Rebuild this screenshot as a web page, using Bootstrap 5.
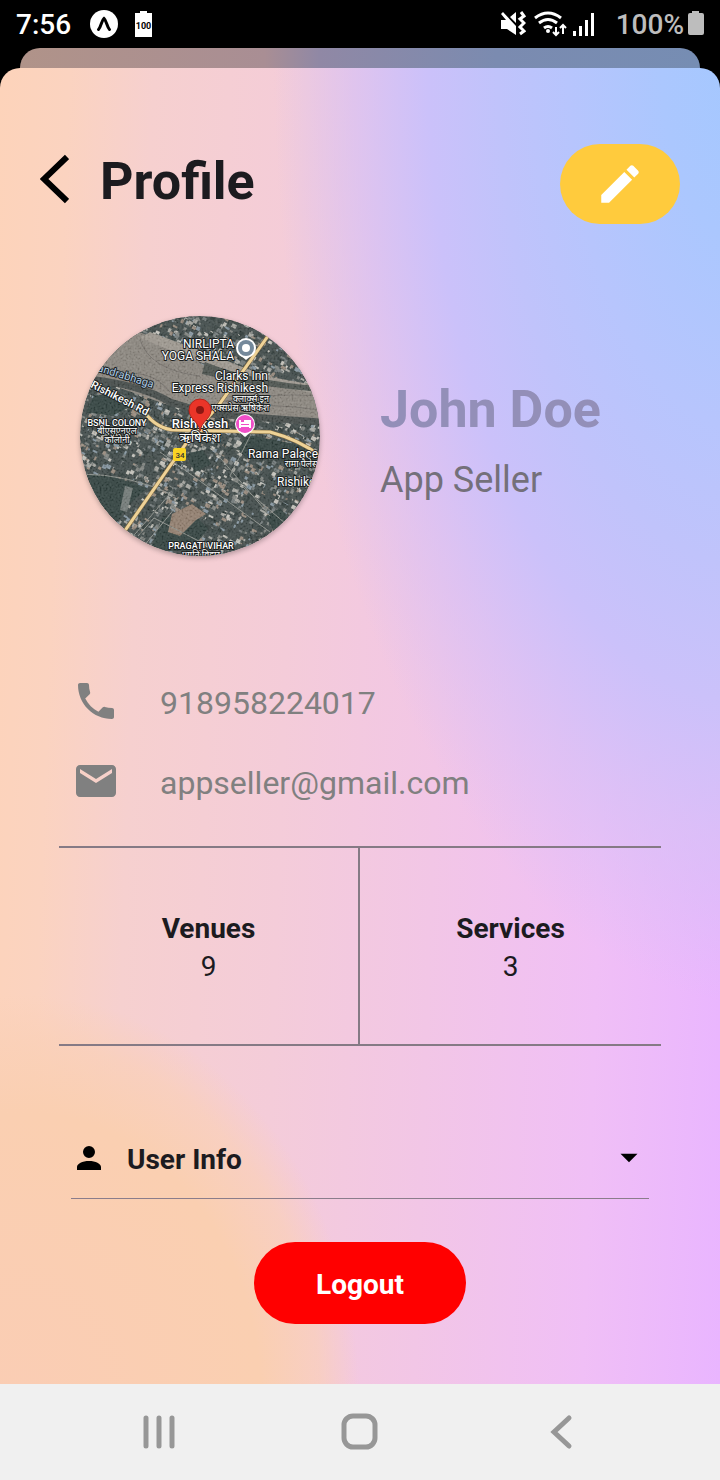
<!DOCTYPE html>
<html lang="en">
<head>
<meta charset="utf-8">
<meta name="viewport" content="width=device-width, initial-scale=1">
<title>Profile</title>
<link rel="stylesheet" href="https://cdn.jsdelivr.net/npm/bootstrap@5.3.0/dist/css/bootstrap.min.css">
<style>
  body { background: #000; color: #1c1b1f; font-family: Roboto, "Noto Sans", "Liberation Sans", sans-serif; font-size: 28px; line-height: 38px; }
  svg { display: block; flex-shrink: 0; }
  .plain { border: 0; background: none; padding: 0; }
  .statusbar { height: 48px; padding: 2px 15px 0 16px; color: #fff; font-weight: 500; }
  .charge { color: #bdbdbd; margin-right: 3px; }
  .sheet-behind { height: 20px; margin: 0 20px; border-radius: 20px 20px 0 0; background: linear-gradient(90deg, #b09389 0%, #a98e94 36%, #9088a5 44%, #7b8bb0 70%, #768db3 100%); }
  .sheet {
    border-radius: 20px 20px 0 0;
    padding: 76px 0 60px;
    background:
      radial-gradient(ellipse 46% 30% at 3% 101%, #facdb4 0%, #facfb1 72%, #fad0b6aa 90%, #facdb000 102%),
      radial-gradient(ellipse 65% 69% at 105% 0%, #a3c8ff 0%, #abc7fe 20%, #b7c5fd 40%, #c0c3fb 55%, #cbc1fa 70%, #d5c1f6b0 85%, #e2c3ec00 103%),
      linear-gradient(92deg, #fdd3ba 0%, #fbd3c0 9%, #f6d0cf 20%, #f4ccd9 40%, #f2c6e6 60%, #f0bff6 82%, #e9b5ff 100%);
  }
  .top-row { padding: 0 40px; gap: 31px; }
  .title { font-size: 52px; line-height: 76px; font-weight: 700; }
  .edit-btn { width: 120px; height: 80px; border-radius: 40px; background: #ffcb3d; }
  .person { margin-top: 92px; padding: 0 40px 0 80px; gap: 60px; }
  .avatar { width: 240px; height: 240px; border-radius: 50%; box-shadow: 0 2px 5px #0004; }
  .full-name { font-size: 52px; line-height: 84px; font-weight: 700; color: #938fb8; }
  .role { font-size: 36px; line-height: 56px; color: #74707a; }
  .contacts { margin-top: 105px; padding: 0 72px; }
  .contacts a { height: 80px; gap: 40px; font-size: 32px; color: #808080; }
  .stats { margin: 25px 59px 0; border: solid #857a85; border-width: 2px 0; height: 200px; }
  .stats .stat:first-child { border-right: 2px solid #857a85; }
  .info-toggle { margin: 72px 71px 0; padding: 0 3px 0 0; height: 81px; border-bottom: 1px solid #8b7d8b; color: #1c1b1f; }
  .logout { margin-top: 43px; width: 212px; height: 82px; border-radius: 41px; background: #f00; color: #fff; }
  .navkeys { height: 96px; padding: 0 58px; background: #f0f0f0; }
  .map text { fill: #fff; stroke: #1b2020; stroke-width: 2px; paint-order: stroke; stroke-linejoin: round; }
</style>
</head>
<body class="d-flex flex-column min-vh-100">
<header class="statusbar d-flex align-items-center">
  <span>7:56</span>
  <svg class="ms-3" width="32" height="32" viewBox="0 0 32 32"><circle cx="17" cy="15" r="14" fill="#fff"/><path d="M11.500 20.500C14 18 14.500 11.500 17 9.500C19.500 11.500 20 18 22.500 20.500" fill="none" stroke="#000" stroke-width="3" stroke-linecap="round"/></svg>
  <svg class="ms-3" width="18" height="28" viewBox="0 0 18 28"><path d="M0 2h5V0h7v2h5v24H0z" fill="#fff"/><text x="8.500" y="18" text-anchor="middle" font-size="9" font-weight="700">100</text></svg>
  <svg class="ms-auto" width="26" height="28" viewBox="0 0 26 28" fill="#fff"><path d="M1 9h5L1 3l2-2 13 14v9L7 18H1zM10 6l6-5v11z"/><path d="M21 1l3 4-4 3 4 4-4 4 4 4-4 3" fill="none" stroke="#fff" stroke-width="3"/></svg>
  <svg class="ms-2" width="34" height="28" viewBox="0 0 34 28" fill="none" stroke="#fff" stroke-width="3"><path d="M1 7Q14-3 27 7M5 12q9-7 18 0M10 17q4-3 8 0"/><circle cx="14" cy="20" r="2" fill="#fff" stroke="none"/><path d="M22 16v8m-3-3l3 3 3-3M29 23v-9m-3 3l3-3 3 3" stroke-width="2"/></svg>
  <svg class="ms-1" width="24" height="26" viewBox="0 0 24 26" fill="#fff"><path d="M1 19h3v5H1zM7 14h3v10H7zM13 8h3v16h-3zM19 1h3v23h-3z"/></svg>
  <span class="charge ms-3 ps-1">100%</span>
  <svg width="18" height="28" viewBox="0 0 18 28"><path d="M2 2h3V0h7v2h3q2 0 2 2v18q0 2-2 2H3q-2 0-2-2V4q0-2 2-2" fill="#bdbdbd"/></svg>
</header>
<div class="sheet-behind"></div>
<main class="sheet flex-grow-1 d-flex flex-column">
  <div class="top-row d-flex align-items-start">
    <button class="plain" aria-label="Back"><svg width="29" height="70" viewBox="0 0 29 70"><path d="M27 13L4 35l23 22" fill="none" stroke="#000" stroke-width="6"/></svg></button>
    <h1 class="title m-0">Profile</h1>
    <button class="plain edit-btn ms-auto d-flex align-items-center justify-content-center" aria-label="Edit profile"><svg width="50" height="50" viewBox="0 0 24 24" fill="#fff"><path d="M20.710 7.040c.39-.39.39-1.040 0-1.410l-2.340-2.340c-.37-.39-1.020-.39-1.410 0l-1.840 1.830 3.750 3.750M3 17.250V21h3.750L17.810 9.930l-3.750-3.750z"/></svg></button>
  </div>

  <section class="person d-flex align-items-center">
    <svg class="avatar map" viewBox="0 0 240 240" role="img" aria-label="Satellite map of Rishikesh">
      <defs>
        <clipPath id="disc"><circle cx="120" cy="120" r="120"/></clipPath>
        <filter id="grain" x="0" y="0" width="100%" height="100%"><feTurbulence type="fractalNoise" baseFrequency=".5" numOctaves="2" seed="4"/><feColorMatrix values="1.500 0 0 0 -.4  1.500 0 0 0 -.4  1.500 0 0 0 -.4  0 0 0 0 .14"/></filter>
      </defs>
      <g clip-path="url(#disc)">
        <path d="M0 0h240v240H0z" fill="#3f4a49"/>
        <g id="houses"></g>
        <path d="M-5 40L50 12L88 28L125 50L170 60L205 66L240 72V104L200 100L150 100L110 94L85 88L40 72L0 58z" fill="#8d8880"/>
        <path d="M60 22l60 24 60 22 60 10v-8l-55-10-50-20L70 16z" fill="#a09a91"/>
        <path d="M140 86q50-10 100-6M130 92q60-6 110 2M30 60q40-10 60 16M60 24q10 30 60 36" fill="none" stroke="#746f69"/>
        <path d="M125 46q50 20 115 24v6q-70-6-118-18z" fill="#4b524d"/>
        <path d="M0 62q60 6 90 24l40 12 110 8" fill="none" stroke="#434a48" stroke-width="7"/>
        <path d="M168 119l48 9 24 12v10l-30-6-42-1-10-10zM0 157l35 4 32 11-20 18-16 26-25 4L0 195zM82 202l32-4 14 15-18 22H70zM14 80l24-4 14 14-20 10-26-4zM186 200l14-8 14 16-14 20zM105 138l18-4 8 14-16 8z" fill="#2f403d"/>
        <path d="M92 198l20-10 14 10-10 6-16 16-12-4z" fill="#94806f"/>
        <path d="M45 170l8 2-6 24-7-2z" fill="#737b78"/>
        <path d="M0 158q50 0 95 22M90 178l-48 55M80 136l110 80M175 110l-25 50 70 60M130 130l60 70M58 220l16-18 70 36M60 228l30 14M95 192l-36 44" fill="none" stroke="#8e928c"/>
        <path d="M0 0h240v240H0z" filter="url(#grain)"/>
        <path d="M188 20L138 90L110 122L90 150L44 216M64 96q14 18 32 18l94 2q30 8 50 24" fill="none" stroke="#806a42" stroke-width="4"/>
        <path d="M188 20L138 90L110 122L90 150L44 216M64 96q14 18 32 18l94 2q30 8 50 24" fill="none" stroke="#eed297" stroke-width="3"/>
        <text x="154" y="32" font-size="12" text-anchor="end">NIRLIPTA</text>
        <text x="154" y="44" font-size="12" text-anchor="end">YOGA SHALA</text>
        <text x="188" y="64" font-size="12" text-anchor="end">Clarks Inn</text>
        <text x="188" y="76" font-size="12" text-anchor="end">Express Rishikesh</text>
        <text x="189" y="86" font-size="9" text-anchor="end">क्लार्क्स इन</text>
        <text x="189" y="95" font-size="9" text-anchor="end">एक्सप्रेस ऋषिकेश</text>
        <text transform="translate(17 55) rotate(17)" font-size="11" style="fill:#aecbe5">andrabhaga</text>
        <text transform="translate(10 71) rotate(27)" font-size="11" font-weight="500">Rishikesh Rd</text>
        <text x="37" y="110" font-size="9" font-weight="500" text-anchor="middle">BSNL COLONY</text>
        <text x="37" y="118" font-size="9" text-anchor="middle">बीएसएनएल</text>
        <text x="37" y="127" font-size="9" text-anchor="middle">कॉलोनी</text>
        <text x="120" y="112" font-size="13" font-weight="500" text-anchor="middle">Rishikesh</text>
        <text x="120" y="126" font-size="13" text-anchor="middle">ऋषिकेश</text>
        <text x="238" y="142" font-size="12" text-anchor="end">Rama Palace</text>
        <text x="238" y="151" font-size="9" text-anchor="end">रामा पैलेस</text>
        <text x="197" y="170" font-size="12">Rishikesh</text>
        <text x="121" y="233" font-size="9" font-weight="500" text-anchor="middle">PRAGATI VIHAR</text>
        <text x="121" y="242" font-size="9" text-anchor="middle">प्रगति विहार</text>
        <path d="M166 44l-7-6h14z" fill="#fff"/><circle cx="166" cy="32" r="10" fill="#fff"/><circle cx="166" cy="32" r="8" fill="#74899b"/><circle cx="166" cy="32" r="4" fill="#fff"/>
        <path d="M165 121l-7-6h14z" fill="#fff"/><circle cx="165" cy="108" r="10" fill="#fff"/><circle cx="165" cy="108" r="9" fill="#f04fc8"/>
        <path d="M160 104v8m0-2h10v2m0-2v-3h-10m4-2h6v2" stroke="#fff" stroke-width="2" fill="none"/>
        <path d="M120 115c-1-9-11-12-11-21a11 11 0 0 1 22 0c0 9-10 12-11 21z" fill="#ea3529" stroke="#b3261e"/><circle cx="120" cy="94" r="4" fill="#8c1712"/>
        <rect x="93" y="132" width="13" height="13" rx="2" fill="#f9d423"/><text x="100" y="142" font-size="8" font-weight="500" text-anchor="middle" style="fill:#333;stroke:none">34</text>
      </g>
    </svg>
    <div class="pt-1">
      <div class="full-name">John Doe</div>
      <div class="role">App Seller</div>
    </div>
  </section>

  <address class="contacts mb-0 d-flex flex-column">
    <a class="d-flex align-items-center text-decoration-none" href="tel:918958224017"><svg width="48" height="48" viewBox="0 0 24 24" fill="currentColor"><path d="M6.620 10.790c1.440 2.830 3.760 5.140 6.590 6.590l2.200-2.200c.27-.27.67-.36 1.020-.24 1.120.37 2.330.57 3.570.57.55 0 1 .45 1 1V20c0 .55-.45 1-1 1C10.610 21 3 13.390 3 4c0-.55.45-1 1-1h3.500c.55 0 1 .45 1 1 0 1.250.2 2.450.57 3.570.11.35.03.74-.25 1.020z"/></svg><span class="pt-1">918958224017</span></a>
    <a class="d-flex align-items-center text-decoration-none" href="mailto:appseller@gmail.com"><svg width="48" height="48" viewBox="0 0 24 24" fill="currentColor"><path d="M20 4H4c-1.100 0-2 .9-2 2v12c0 1.100.9 2 2 2h16c1.100 0 2-.9 2-2V6c0-1.100-.9-2-2-2zm0 4l-8 5-8-5V6l8 5 8-5z"/></svg><span class="pt-1">appseller@gmail.com</span></a>
  </address>

  <section class="stats d-flex text-center">
    <div class="stat w-50 pt-1 d-flex flex-column justify-content-center"><strong>Venues</strong><span>9</span></div>
    <div class="stat w-50 pt-1 d-flex flex-column justify-content-center"><strong>Services</strong><span>3</span></div>
  </section>

  <button class="info-toggle d-flex align-items-center bg-transparent border-top-0 border-start-0 border-end-0" aria-expanded="false">
    <svg width="36" height="36" viewBox="0 0 24 24"><path d="M12 4a4 4 0 1 1 0 8 4 4 0 0 1 0-8zm0 10c4.420 0 8 1.790 8 4v2H4v-2c0-2.210 3.580-4 8-4z"/></svg>
    <strong class="ms-3 ps-1 pt-1">User Info</strong>
    <svg class="ms-auto" width="34" height="34" viewBox="0 0 24 24"><path d="M6 9h12l-6 6z"/></svg>
  </button>

  <button class="plain logout pt-1 fw-bold align-self-center">Logout</button>
</main>

<nav class="navkeys d-flex align-items-center" aria-label="System navigation">
  <button class="plain w-100 d-flex justify-content-center" aria-label="Recent apps"><svg width="36" height="40" viewBox="0 0 36 40" stroke="#979797" stroke-width="5" stroke-linecap="round"><path d="M5 6v28M18 6v28M31 6v28"/></svg></button>
  <button class="plain w-100 d-flex justify-content-center" aria-label="Home"><svg width="40" height="40" viewBox="0 0 40 40"><rect x="4" y="4" width="31" height="31" rx="9" fill="none" stroke="#979797" stroke-width="5"/></svg></button>
  <button class="plain w-100 d-flex justify-content-center" aria-label="Back"><svg width="24" height="40" viewBox="0 0 24 40"><path d="M20 6L5 20l15 14" fill="none" stroke="#979797" stroke-width="5" stroke-linecap="round"/></svg></button>
</nav>

<script src="https://cdn.jsdelivr.net/npm/bootstrap@5.3.0/dist/js/bootstrap.bundle.min.js"></script>
<script>
  // Scatter rooftops over the map from a fixed seed so they stay the same on every load.
  const roofs = ['#3a4543', '#818581', '#a9aaa4', '#737b7b', '#c9c7bf', '#46504d', '#9a8c7e', '#8798a3', '#2c3836', '#35413f'];
  let seed = 7;
  const next = n => (seed = seed * 16807 % 2147483647) % n;
  let rects = '';
  for (let i = 0; i < 7500; i++) {
    rects += `<rect x="${next(360) - 60}" y="${next(360) - 60}" width="${2 + next(4)}" height="${2 + next(3)}" fill="${roofs[next(roofs.length)]}"/>`;
  }
  document.getElementById('houses').innerHTML = `<g transform="rotate(28 120 120)">${rects}</g>`;
</script>
</body>
</html>
